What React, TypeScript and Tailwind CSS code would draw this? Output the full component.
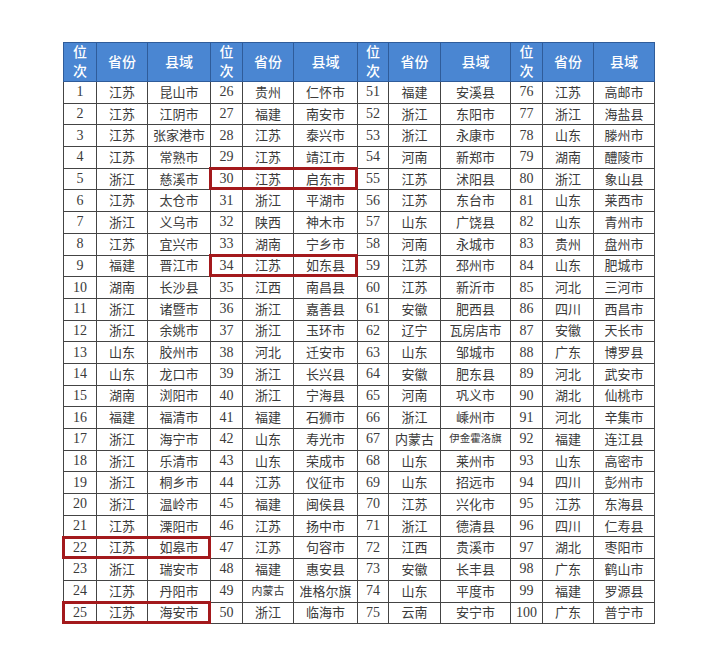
import React from "react";

type Row = [string, string, string];

const g1: Row[] = [
  ["1", "江苏", "昆山市"], ["2", "江苏", "江阴市"], ["3", "江苏", "张家港市"], ["4", "江苏", "常熟市"], ["5", "浙江", "慈溪市"],
  ["6", "江苏", "太仓市"], ["7", "浙江", "义乌市"], ["8", "江苏", "宜兴市"], ["9", "福建", "晋江市"], ["10", "湖南", "长沙县"],
  ["11", "浙江", "诸暨市"], ["12", "浙江", "余姚市"], ["13", "山东", "胶州市"], ["14", "山东", "龙口市"], ["15", "湖南", "浏阳市"],
  ["16", "福建", "福清市"], ["17", "浙江", "海宁市"], ["18", "浙江", "乐清市"], ["19", "浙江", "桐乡市"], ["20", "浙江", "温岭市"],
  ["21", "江苏", "溧阳市"], ["22", "江苏", "如皋市"], ["23", "浙江", "瑞安市"], ["24", "江苏", "丹阳市"], ["25", "江苏", "海安市"],
];
const g2: Row[] = [
  ["26", "贵州", "仁怀市"], ["27", "福建", "南安市"], ["28", "江苏", "泰兴市"], ["29", "江苏", "靖江市"], ["30", "江苏", "启东市"],
  ["31", "浙江", "平湖市"], ["32", "陕西", "神木市"], ["33", "湖南", "宁乡市"], ["34", "江苏", "如东县"], ["35", "江西", "南昌县"],
  ["36", "浙江", "嘉善县"], ["37", "浙江", "玉环市"], ["38", "河北", "迁安市"], ["39", "浙江", "长兴县"], ["40", "浙江", "宁海县"],
  ["41", "福建", "石狮市"], ["42", "山东", "寿光市"], ["43", "山东", "荣成市"], ["44", "江苏", "仪征市"], ["45", "福建", "闽侯县"],
  ["46", "江苏", "扬中市"], ["47", "江苏", "句容市"], ["48", "福建", "惠安县"], ["49", "内蒙古", "准格尔旗"], ["50", "浙江", "临海市"],
];
const g3: Row[] = [
  ["51", "福建", "安溪县"], ["52", "浙江", "东阳市"], ["53", "浙江", "永康市"], ["54", "河南", "新郑市"], ["55", "江苏", "沭阳县"],
  ["56", "江苏", "东台市"], ["57", "山东", "广饶县"], ["58", "河南", "永城市"], ["59", "江苏", "邳州市"], ["60", "江苏", "新沂市"],
  ["61", "安徽", "肥西县"], ["62", "辽宁", "瓦房店市"], ["63", "山东", "邹城市"], ["64", "安徽", "肥东县"], ["65", "河南", "巩义市"],
  ["66", "浙江", "嵊州市"], ["67", "内蒙古", "伊金霍洛旗"], ["68", "山东", "莱州市"], ["69", "山东", "招远市"], ["70", "江苏", "兴化市"],
  ["71", "浙江", "德清县"], ["72", "江西", "贵溪市"], ["73", "安徽", "长丰县"], ["74", "山东", "平度市"], ["75", "云南", "安宁市"],
];
const g4: Row[] = [
  ["76", "江苏", "高邮市"], ["77", "浙江", "海盐县"], ["78", "山东", "滕州市"], ["79", "湖南", "醴陵市"], ["80", "浙江", "象山县"],
  ["81", "山东", "莱西市"], ["82", "山东", "青州市"], ["83", "贵州", "盘州市"], ["84", "山东", "肥城市"], ["85", "河北", "三河市"],
  ["86", "四川", "西昌市"], ["87", "安徽", "天长市"], ["88", "广东", "博罗县"], ["89", "河北", "武安市"], ["90", "湖北", "仙桃市"],
  ["91", "河北", "辛集市"], ["92", "福建", "连江县"], ["93", "山东", "高密市"], ["94", "四川", "彭州市"], ["95", "江苏", "东海县"],
  ["96", "四川", "仁寿县"], ["97", "湖北", "枣阳市"], ["98", "广东", "鹤山市"], ["99", "福建", "罗源县"], ["100", "广东", "普宁市"],
];

const groups = [g1, g2, g3, g4];
const widths = [33, 51, 63, 32, 51, 64, 31, 52, 70, 32, 51, 61];

const font = { fontFamily: '"Liberation Serif", "Noto Sans CJK SC", serif' };

const HEADER_H = 39;
const ROW_H = 21.7;

function HeaderCells() {
  return (
    <>
      <th className="border border-[#2f5c9a] bg-[#4a86d2] p-0 text-[14px] font-medium leading-[19px] text-white">
        位<br />次
      </th>
      <th className="border border-[#2f5c9a] bg-[#4a86d2] p-0 text-[14px] font-medium text-white">省份</th>
      <th className="border border-[#2f5c9a] bg-[#4a86d2] p-0 text-[14px] font-medium text-white">县域</th>
    </>
  );
}

// Red boxes: [rowIndex(0-based), groupIndex]
const boxes: [number, number][] = [
  [4, 1],
  [8, 1],
  [21, 0],
  [24, 0],
];

function groupLeft(g: number) {
  let x = 0;
  for (let i = 0; i < g * 3; i++) x += widths[i];
  return x;
}
function groupWidth(g: number) {
  return widths[g * 3] + widths[g * 3 + 1] + widths[g * 3 + 2];
}

export default function App() {
  return (
    <div className="min-h-[666px] w-[720px] bg-white pl-[63px] pt-[42px]" style={font}>
      <div className="relative w-[591px]">
        <table className="w-[591px] table-fixed border-collapse border border-[#333] text-center text-[13px] text-[#3a3a3a]">
          <colgroup>
            {widths.map((w, i) => (
              <col key={i} style={{ width: w }} />
            ))}
          </colgroup>
          <thead>
            <tr style={{ height: HEADER_H }}>
              <HeaderCells />
              <HeaderCells />
              <HeaderCells />
              <HeaderCells />
            </tr>
          </thead>
          <tbody>
            {g1.map((_, r) => (
              <tr key={r} style={{ height: ROW_H }}>
                {groups.map((g, gi) => {
                  const [n, p, c] = g[r];
                  return (
                    <React.Fragment key={gi}>
                      <td className="border border-[#444] p-0 text-[14px] leading-none">{n}</td>
                      <td
                        className={`border border-[#444] p-0 leading-none ${
                          p === "内蒙古" && gi === 1 ? "text-[11px]" : "text-[13px]"
                        }`}
                      >
                        {p}
                      </td>
                      <td
                        className={`whitespace-nowrap border border-[#444] p-0 leading-none ${
                          c === "伊金霍洛旗" ? "text-[10.5px]" : "text-[13px]"
                        }`}
                      >
                        {c}
                      </td>
                    </React.Fragment>
                  );
                })}
              </tr>
            ))}
          </tbody>
        </table>
        {boxes.map(([r, g], i) => (
          <div
            key={i}
            className="pointer-events-none absolute border-[3px] border-[#a3191c]"
            style={{
              left: groupLeft(g) - 1,
              top: HEADER_H + r * ROW_H - 1,
              width: groupWidth(g) + 2,
              height: ROW_H + 2,
            }}
          />
        ))}
      </div>
    </div>
  );
}
